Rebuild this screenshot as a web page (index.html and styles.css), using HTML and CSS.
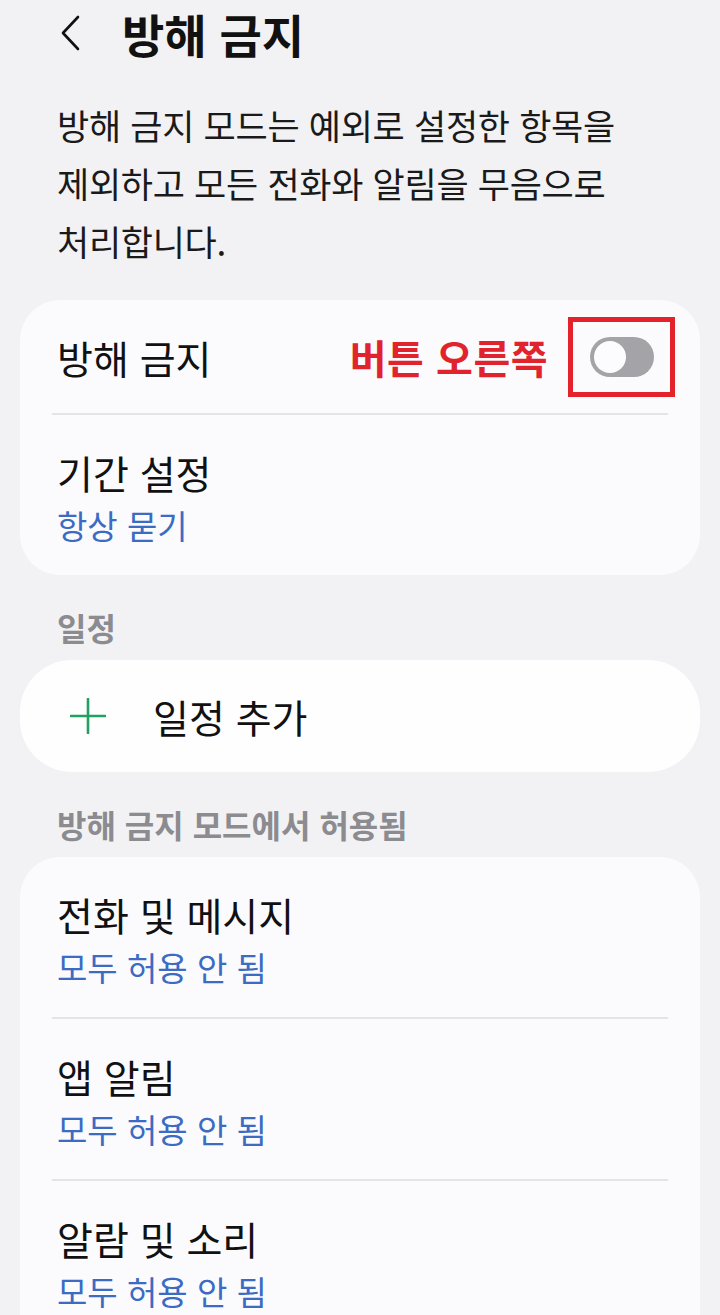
FILE: index.html
```html
<!DOCTYPE html>
<html lang="ko">
<head>
<meta charset="utf-8">
<title>방해 금지</title>
<link rel="stylesheet" href="styles.css">
</head>
<body>
<div class="page">
  <header class="topbar">
    <svg class="back" viewBox="0 0 20 36" width="20" height="36" aria-hidden="true">
      <path d="M18 2 L3 18 L18 34" fill="none" stroke="#111" stroke-width="2.6" stroke-linecap="round" stroke-linejoin="round"/>
    </svg>
    <h1 class="title">방해 금지</h1>
  </header>

  <p class="desc">방해 금지 모드는 예외로 설정한 항목을 제외하고 모든 전화와 알림을 무음으로 처리합니다.</p>

  <section class="card">
    <div class="row row-single">
      <span class="row-title">방해 금지</span>
      <div class="row-right">
        <span class="note">버튼 오른쪽</span>
        <span class="highlight">
          <span class="toggle"><span class="knob"></span></span>
        </span>
      </div>
    </div>
    <div class="divider"></div>
    <div class="row">
      <div class="row-title">기간 설정</div>
      <div class="row-sub">항상 묻기</div>
    </div>
  </section>

  <h2 class="section-label">일정</h2>
  <section class="card card-pill">
    <div class="add-row">
      <svg class="plus" viewBox="0 0 36 36" width="36" height="36" aria-hidden="true">
        <path d="M18 1 V35 M1 18 H35" stroke="#23a060" stroke-width="2.6" stroke-linecap="round"/>
      </svg>
      <span class="row-title">일정 추가</span>
    </div>
  </section>

  <h2 class="section-label">방해 금지 모드에서 허용됨</h2>
  <section class="card card-last">
    <div class="row">
      <div class="row-title">전화 및 메시지</div>
      <div class="row-sub">모두 허용 안 됨</div>
    </div>
    <div class="divider"></div>
    <div class="row">
      <div class="row-title">앱 알림</div>
      <div class="row-sub">모두 허용 안 됨</div>
    </div>
    <div class="divider"></div>
    <div class="row">
      <div class="row-title">알람 및 소리</div>
      <div class="row-sub">모두 허용 안 됨</div>
    </div>
  </section>
</div>
</body>
</html>
```

FILE: styles.css
```css
html, body {
  margin: 0;
  padding: 0;
}
body {
  background: #f2f2f4;
  font-family: "Noto Sans CJK KR", "Noto Sans", sans-serif;
  color: #111;
  height: 1315px;
  overflow: hidden;
  word-break: keep-all;
}
.page {
  padding: 0 20px;
}
.topbar {
  display: flex;
  align-items: center;
  height: 66px;
  padding-left: 40px;
}
.back {
  display: block;
  margin-right: 42px;
}
.title {
  margin: 0;
  font-size: 46px;
  font-weight: 700;
  line-height: 66px;
}
.desc {
  margin: 30px 37px 30px 37px;
  font-size: 35px;
  letter-spacing: -0.3px;
  line-height: 58px;
  color: #1a1a1a;
}
.card {
  background: #fbfbfd;
  border-radius: 40px;
  overflow: hidden;
}
.card-pill {
  background: #fefefe;
  border-radius: 52px;
}
.card-last {
  border-bottom-left-radius: 0;
  border-bottom-right-radius: 0;
}
.row {
  padding: 33px 37px 30px;
}
.row-title {
  font-size: 39px;
  line-height: 48px;
  color: #111;
}
.row-sub {
  margin-top: 9px;
  font-size: 33px;
  line-height: 40px;
  color: #3b6bc2;
}
.row-single {
  display: flex;
  align-items: center;
  justify-content: space-between;
  padding: 33px 25px 32px 37px;
  height: 48px;
}
.row-right {
  display: flex;
  align-items: center;
  gap: 20px;
}
.note {
  font-size: 40px;
  font-weight: 700;
  color: #e0232c;
  letter-spacing: 0.5px;
  line-height: 48px;
}
.highlight {
  display: flex;
  align-items: center;
  justify-content: center;
  width: 97px;
  height: 70px;
  border: 5px solid #e4222b;
}
.toggle {
  display: block;
  position: relative;
  width: 64px;
  height: 40px;
  border-radius: 20px;
  background: #a4a4a8;
}
.knob {
  position: absolute;
  left: 4px;
  top: 4px;
  width: 32px;
  height: 32px;
  border-radius: 50%;
  background: #fcfcfe;
}
.divider {
  height: 2px;
  margin: 0 32px;
  background: #e4e4e7;
}
.section-label {
  margin: 32px 37px 13px;
  font-size: 32px;
  font-weight: 700;
  line-height: 40px;
  color: #8b8b90;
}
.add-row {
  display: flex;
  align-items: center;
  height: 112px;
  padding-left: 50px;
}
.plus {
  display: block;
  margin-right: 47px;
}
```
